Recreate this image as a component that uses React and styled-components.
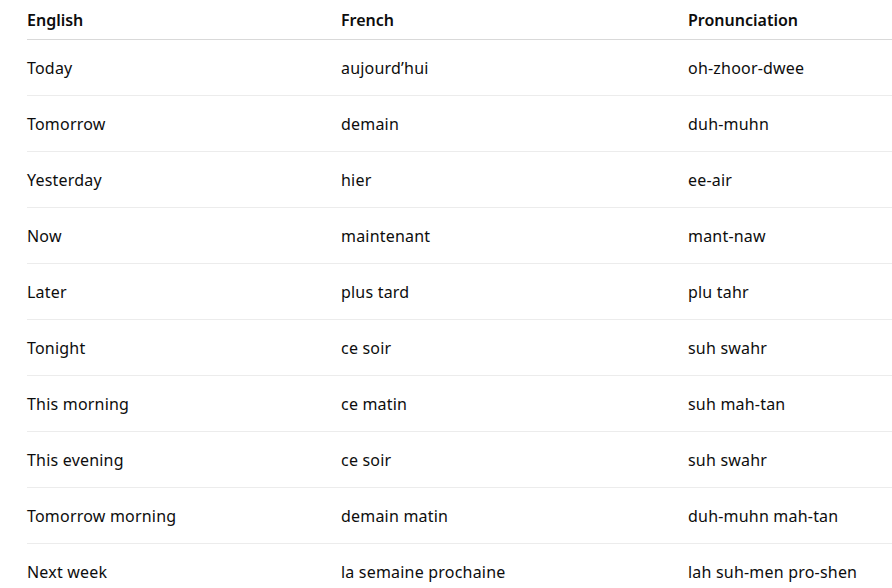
import React from "react";
import styled, { createGlobalStyle } from "styled-components";

const rows = [
  ["Today", "aujourd’hui", "oh-zhoor-dwee"],
  ["Tomorrow", "demain", "duh-muhn"],
  ["Yesterday", "hier", "ee-air"],
  ["Now", "maintenant", "mant-naw"],
  ["Later", "plus tard", "plu tahr"],
  ["Tonight", "ce soir", "suh swahr"],
  ["This morning", "ce matin", "suh mah-tan"],
  ["This evening", "ce soir", "suh swahr"],
  ["Tomorrow morning", "demain matin", "duh-muhn mah-tan"],
  ["Next week", "la semaine prochaine", "lah suh-men pro-shen"],
];

export default function App() {
  return (
    <>
      <GlobalStyle />
      <Table>
        <HeadRow>
          <Cell>English</Cell>
          <Cell>French</Cell>
          <Cell>Pronunciation</Cell>
        </HeadRow>
        {rows.map((r, i) => (
          <Row key={i} $last={i === rows.length - 1}>
            {r.map((c, j) => (
              <Cell key={j}>{c}</Cell>
            ))}
          </Row>
        ))}
      </Table>
    </>
  );
}

const GlobalStyle = createGlobalStyle`
  html, body {
    margin: 0;
    background: #fff;
    overflow: hidden;
  }
  body {
    font-family: "Noto Sans", "Open Sans", sans-serif;
    color: #0d0d0d;
  }
`;

const Table = styled.div`
  margin-left: 27px;
`;

const Row = styled.div`
  display: grid;
  grid-template-columns: 314px 347px 1fr;
  align-items: center;
  height: 55px;
  border-bottom: 1px solid ${(p) => (p.$last ? "transparent" : "#ececec")};
  font-size: 16px;
  letter-spacing: 0.2px;
`;

const HeadRow = styled(Row)`
  height: 39px;
  border-bottom-color: #d9d9d9;
  font-weight: 600;
  letter-spacing: 0;
`;

const Cell = styled.div`
  white-space: nowrap;
`;
